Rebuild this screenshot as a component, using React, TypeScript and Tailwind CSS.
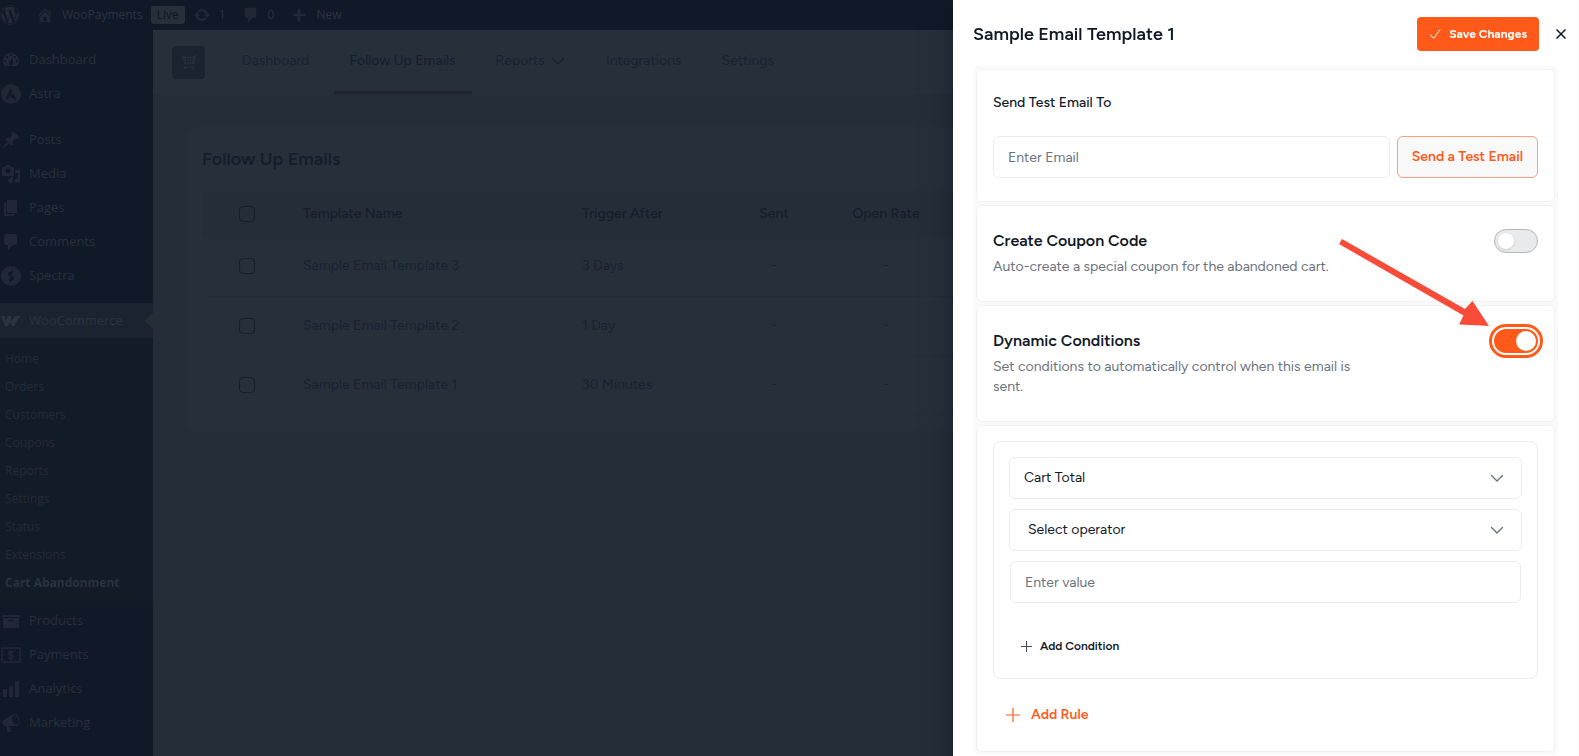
import { useState, type ReactNode } from "react";
import { FaWordpress } from "react-icons/fa";

interface MenuItem {
  label: string;
  icon: ReactNode;
}

interface Template {
  id: number;
  name: string;
  trigger: string;
}

// 20x20 admin glyphs
const glyphs = {
  dashboard:
    "M3.76 16h12.48A7.998 7.998 0 0 0 10 3a7.998 7.998 0 0 0-6.24 13zM10 4c.55 0 1 .45 1 1s-.45 1-1 1-1-.45-1-1 .45-1 1-1zM6 6c.55 0 1 .45 1 1s-.45 1-1 1-1-.45-1-1 .45-1 1-1zm8 0c.55 0 1 .45 1 1s-.45 1-1 1-1-.45-1-1 .45-1 1-1zm-5.37 5.55L12 7v6c0 1.1-.9 2-2 2s-2-.9-2-2c0-.57.24-1.08.63-1.45zM4 10c.55 0 1 .45 1 1s-.45 1-1 1-1-.45-1-1 .45-1 1-1zm12 0c.55 0 1 .45 1 1s-.45 1-1 1-1-.45-1-1 .45-1 1-1z",
  astra:
    "M10 0a10 10 0 1 0 0 20 10 10 0 0 0 0-20zM9.6 4.2l1.5 3-3.8 8.3H4.4zM11.8 8.6l3.7 6.9h-3l-.8-1.7H9.4z",
  posts:
    "M10.44 3.02l1.82-1.82 6.36 6.35-1.83 1.82c-1.05-.68-2.48-.57-3.41.36l-.75.75c-.92.93-1.04 2.35-.35 3.41l-1.83 1.82-2.41-2.41-2.8 2.79c-.42.42-3.38 2.71-3.8 2.29s1.86-3.39 2.28-3.81l2.79-2.79L4.1 9.36l1.83-1.82c1.05.69 2.48.57 3.4-.36l.75-.75c.93-.92 1.05-2.35.36-3.41z",
  media:
    "M13 11V4c0-.55-.45-1-1-1h-1.67L9 1H5L3.67 3H2c-.55 0-1 .45-1 1v7c0 .55.45 1 1 1h10c.55 0 1-.45 1-1zM7 4.5c1.38 0 2.5 1.12 2.5 2.5S8.38 9.5 7 9.5 4.5 8.38 4.5 7 5.62 4.5 7 4.5zM14 6h5v10.5c0 1.38-1.12 2.5-2.5 2.5S14 17.88 14 16.5s1.12-2.5 2.5-2.5c.17 0 .34.02.5.05V9h-3V6zm-4 8.05V13h2v3.5c0 1.38-1.12 2.5-2.5 2.5S7 17.88 7 16.5 8.12 14 9.5 14c.17 0 .34.02.5.05z",
  pages: "M6 15V2h10v13H6zm-1 1h8v2H3V5h2v11z",
  comments:
    "M5 2h9c1.1 0 2 .9 2 2v7c0 1.1-.9 2-2 2h-2l-5 5v-5H5c-1.1 0-2-.9-2-2V4c0-1.1.9-2 2-2z",
  spectra:
    "M10 0a10 10 0 1 0 0 20 10 10 0 0 0 0-20zM11.8 4v3.4L9.4 9l3.4 1.6v2.6L8.2 16v-3.4l2.4-1.6-3.4-1.6V6.8z",
  woo: "M0 5h3.6l.7 5.2L7.2 5h2.6l.8 5.2C12 7.6 13.2 6 14 5h6c-3 2.6-5 6.4-6.2 10h-3.2L9.4 11.2 7.2 15H4z",
  products: "M19 4v2H1V4h18zM2 7h16v10H2V7zm11 3V9H7v1h6z",
  analytics: "M18 18V2h-4v16h4zm-6 0V7H8v11h4zm-6 0v-8H2v8h4z",
  marketing:
    "M18.15 5.94c.46 1.62.38 3.22-.02 4.48-.42 1.28-1.26 2.18-2.3 2.48-.16.06-.26.06-.4.06-.06.02-.12.02-.18.02-.06.02-.14.02-.22.02h-6.8l2.22 5.5c.02.14-.06.26-.14.34-.08.1-.24.16-.34.16H6.95c-.1 0-.26-.06-.34-.16-.08-.08-.16-.2-.14-.34l-1-5.5H4.25l-.02-.02c-.5.06-1.08-.18-1.54-.62s-.88-1.08-1.06-1.88c-.24-.8-.2-1.56-.02-2.2.18-.62.58-1.08 1.06-1.3l.02-.02 9-5.4c.1-.06.18-.1.24-.16.06-.04.14-.08.24-.12.16-.08.28-.12.5-.18 1.04-.3 2.24.1 3.22.98s1.84 2.24 2.26 3.86zm-2.58 5.98h-.02c.4-.1.74-.34 1.04-.7.58-.7.86-1.76.86-3.04 0-.64-.1-1.3-.28-1.98-.34-1.36-1.02-2.5-1.78-3.24s-1.68-1.1-2.46-.88c-.82.22-1.4.96-1.7 2-.32 1.04-.28 2.36.06 3.72.38 1.36 1 2.5 1.8 3.24.78.74 1.62 1.1 2.48.88z",
  home: "M16 8.5l1.53 1.53-1.06 1.06L10 4.6l-6.47 6.49-1.06-1.06L10 2.5l4 4v-2h2v4zm-6-2.46l6 5.99V18H4v-5.97zM12 17v-5H8v5h4z",
  update:
    "M10.2 3.28c3.53 0 6.43 2.61 6.92 6h2.08l-3.5 4-3.5-4h2.32c-.45-1.97-2.21-3.45-4.32-3.45-1.45 0-2.73.71-3.54 1.78L4.95 5.66C6.23 4.2 8.11 3.28 10.2 3.28zm-.4 13.44c-3.52 0-6.43-2.61-6.92-6H.8l3.5-4c1.17 1.33 2.33 2.67 3.5 4H5.48c.45 1.97 2.21 3.45 4.32 3.45 1.45 0 2.73-.71 3.54-1.78l1.71 1.95c-1.28 1.46-3.15 2.38-5.25 2.38z",
  plus: "M17 8.5v3h-5.5V17h-3v-5.5H3v-3h5.5V3h3v5.5z",
};

function Glyph({ d, className = "size-5 text-[#1f2834]" }: { d: string; className?: string }) {
  return (
    <svg className={`${className} shrink-0`} viewBox="0 0 20 20" fill="currentColor" fillRule="evenodd">
      <path d={d} />
    </svg>
  );
}

function PaymentsIcon() {
  return (
    <svg className="size-5 shrink-0 text-[#1f2834]" viewBox="0 0 20 20" fill="none" stroke="currentColor">
      <rect x="1" y="3" width="18" height="14" strokeWidth="1.5" />
      <path
        d="M12.5 7.5C12 6.7 11 6.5 10 6.5c-1.4 0-2.5.6-2.5 1.7 0 2.3 5 1.3 5 3.6 0 1.1-1.1 1.7-2.5 1.7-1 0-2-.3-2.5-1M10 5v10"
        strokeWidth="1.3"
      />
    </svg>
  );
}

function Chevron({ className }: { className: string }) {
  return (
    <svg className={className} viewBox="0 0 16 16" fill="none" stroke="currentColor" strokeWidth={1.4}>
      <path d="M2.5 5.5L8 11l5.5-5.5" strokeLinecap="round" strokeLinejoin="round" />
    </svg>
  );
}

function Plus({ className }: { className: string }) {
  return (
    <svg className={className} viewBox="0 0 14 14" fill="none" stroke="currentColor" strokeWidth={1.2}>
      <path d="M7 0v14M0 7h14" />
    </svg>
  );
}

const coreMenu: MenuItem[] = [
  { label: "Dashboard", icon: <Glyph d={glyphs.dashboard} /> },
  { label: "Astra", icon: <Glyph d={glyphs.astra} /> },
];

const contentMenu: MenuItem[] = [
  { label: "Posts", icon: <Glyph d={glyphs.posts} /> },
  { label: "Media", icon: <Glyph d={glyphs.media} /> },
  { label: "Pages", icon: <Glyph d={glyphs.pages} /> },
  { label: "Comments", icon: <Glyph d={glyphs.comments} /> },
  { label: "Spectra", icon: <Glyph d={glyphs.spectra} /> },
];

const storeMenu: MenuItem[] = [
  { label: "Products", icon: <Glyph d={glyphs.products} /> },
  { label: "Payments", icon: <PaymentsIcon /> },
  { label: "Analytics", icon: <Glyph d={glyphs.analytics} /> },
  { label: "Marketing", icon: <Glyph d={glyphs.marketing} /> },
];

const wooSubmenu = [
  "Home",
  "Orders",
  "Customers",
  "Coupons",
  "Reports",
  "Settings",
  "Status",
  "Extensions",
  "Cart Abandonment",
];

const tabs = ["Dashboard", "Follow Up Emails", "Reports", "Integrations", "Settings"];

const templates: Template[] = [
  { id: 3, name: "Sample Email Template 3", trigger: "3 Days" },
  { id: 2, name: "Sample Email Template 2", trigger: "1 Day" },
  { id: 1, name: "Sample Email Template 1", trigger: "30 Minutes" },
];

function MenuGroup({ items }: { items: MenuItem[] }) {
  return (
    <ul>
      {items.map((item) => (
        <li key={item.label}>
          <a href="#" className="flex h-[34px] items-center gap-2 px-px">
            {item.icon}
            {item.label}
          </a>
        </li>
      ))}
    </ul>
  );
}

function AdminBar() {
  return (
    <div className="flex h-[30px] items-center bg-[#101927] text-xs text-[#2b343f]">
      <FaWordpress className="size-5 text-[#232c38]" />
      <a href="#" className="ml-4 flex items-center gap-2">
        <Glyph d={glyphs.home} className="size-[18px] text-[#1f2834]" />
        WooPayments
      </a>
      <span className="ml-2 rounded-xs bg-[#25303b] px-1.5 leading-[18px] text-[#101927]">Live</span>
      <a href="#" className="ml-2 flex items-center gap-2">
        <Glyph d={glyphs.update} className="size-[18px] text-[#1f2834]" />1
      </a>
      <a href="#" className="ml-4 flex items-center gap-2">
        <Glyph d={glyphs.comments} className="size-[18px] text-[#1f2834]" />0
      </a>
      <a href="#" className="ml-4 flex items-center gap-2">
        <Glyph d={glyphs.plus} className="size-[18px] text-[#1f2834]" />
        New
      </a>
    </div>
  );
}

function Sidebar() {
  return (
    <nav className="w-[153px] shrink-0 bg-[#101927] pt-[13px] text-[13px] text-[#27303b]">
      <MenuGroup items={coreMenu} />
      <div className="mt-3">
        <MenuGroup items={contentMenu} />
      </div>
      <a
        href="#"
        className="relative mt-2.5 flex h-[35px] items-center gap-2 bg-[#1a232f] px-px text-[#2a333e]"
      >
        <Glyph d={glyphs.woo} className="size-5 text-[#2a333e]" />
        WooCommerce
        <span className="absolute right-0 border-y-8 border-r-8 border-y-transparent border-r-[#242e39]" />
      </a>
      <ul className="bg-[#121b28] py-[7px] text-xs text-[#222b37]">
        {wooSubmenu.map((label) => (
          <li key={label}>
            <a
              href="#"
              className={`flex h-7 items-center px-[5px] ${label === "Cart Abandonment" ? "font-bold text-[#29323d]" : ""}`}
            >
              {label}
            </a>
          </li>
        ))}
      </ul>
      <MenuGroup items={storeMenu} />
    </nav>
  );
}

function RowCheckbox({ label }: { label: string }) {
  return (
    <input
      type="checkbox"
      aria-label={label}
      className="block size-4 appearance-none rounded-sm border border-[#151e2b]"
    />
  );
}

function EmailsPage() {
  return (
    <main className="min-w-0 flex-1 bg-[#242e39] font-[Figtree,Inter,sans-serif] text-sm text-[#182230]">
      <header className="flex h-16 items-center bg-[#26303b] pl-[19px]">
        <div className="flex size-[33px] items-center justify-center rounded-sm bg-[#1b2230] text-[#25303c]">
          <svg className="size-4" viewBox="0 0 16 16" fill="currentColor">
            <path d="M14.8.5H16v1h-.7L13.8 10H3.6L.5 2.5h12.8zM3 13.5a1 1 0 0 1 1-1h9v1H5.5a1.3 1.3 0 1 1-2.5 0zM11 14.5a1.3 1.3 0 1 0 2.6 0 1.3 1.3 0 0 0-2.6 0z" />
            <path
              d="M2 5h12M3 7.500h10.500M5 2.500l1 7.500M8 2.500V10M11 2.500L10.500 10"
              stroke="#1b2230"
              strokeWidth=".7"
            />
          </svg>
        </div>
        <nav className="ml-[21px] flex h-full gap-2">
          {tabs.map((tab) => (
            <a
              key={tab}
              href="#"
              className={`flex items-center gap-[5px] border-b-3 px-4 ${
                tab === "Follow Up Emails" ? "border-[#1d2431] text-[#141d2b]" : "border-transparent"
              }`}
            >
              {tab}
              {tab === "Reports" && <Chevron className="size-4" />}
            </a>
          ))}
        </nav>
      </header>

      <section className="m-[33px] rounded-xl bg-[#26303b] p-4">
        <h1 className="mb-[18px] pt-0.5 text-lg font-semibold text-[#141d2b]">Follow Up Emails</h1>
        <table className="w-full table-fixed text-left">
          <thead>
            <tr className="h-[46px] bg-[#242e39] text-[#141d2b]">
              <th className="w-[101px] pl-[37px]">
                <RowCheckbox label="Select all templates" />
              </th>
              <th className="w-[279px] font-medium">Template Name</th>
              <th className="w-[143px] font-medium">Trigger After</th>
              <th className="w-[98px] text-center font-medium">Sent</th>
              <th className="w-[126px] text-center font-medium">Open Rate</th>
              <th />
            </tr>
          </thead>
          <tbody>
            {templates.map((t) => (
              <tr key={t.id} className="h-[59px] border-b border-[#232d38]">
                <td className="pl-[37px]">
                  <RowCheckbox label={t.name} />
                </td>
                <td>{t.name}</td>
                <td>{t.trigger}</td>
                <td className="text-center">-</td>
                <td className="text-center">-</td>
                <td />
              </tr>
            ))}
          </tbody>
        </table>
      </section>
    </main>
  );
}

interface SettingProps {
  id: string;
  title: string;
  description: string;
  children: ReactNode;
}

function SettingCard({ id, title, description, children }: SettingProps) {
  return (
    <div className="flex justify-between rounded-md border border-[#f1f1f2] bg-white px-4 pt-[23px] pb-6">
      <div className="max-w-[380px]">
        <label htmlFor={id} className="block text-base font-semibold">
          {title}
        </label>
        <p className="mt-1 text-[#6b7280]">{description}</p>
      </div>
      {children}
    </div>
  );
}

function Drawer() {
  const [coupon, setCoupon] = useState(false);
  const [dynamic, setDynamic] = useState(true);

  return (
    <aside className="fixed inset-y-0 right-0 w-[626px] border-r border-[#f8f8f8] bg-white font-[Figtree,Inter,sans-serif] text-sm text-[#111827] shadow-[0_20px_24px_rgba(10,18,30,0.5)]">
      <header className="flex h-[66px] items-center pt-0.5 pr-[11px] pl-5">
        <h2 className="text-lg font-semibold">Sample Email Template 1</h2>
        <button className="ml-auto flex h-[34px] items-center gap-2 rounded-sm bg-[#ff5a1a] px-3 text-xs font-bold text-white">
          <svg className="size-3" viewBox="0 0 12 12" fill="none" stroke="currentColor">
            <path d="M1 6.5L4.5 10.5 11 1.5" />
          </svg>
          Save Changes
        </button>
        <button aria-label="Close" className="ml-4 flex size-3 items-center justify-center">
          <svg className="size-[10px]" viewBox="0 0 10 10" fill="none" stroke="currentColor" strokeWidth={1.5}>
            <path d="M.5.5l9 9M9.5.5l-9 9" />
          </svg>
        </button>
      </header>

      <div className="mx-5 flex flex-col gap-[3px] rounded-md bg-[#fafafa] p-[3px]">
        <div className="h-[133px] rounded-md border border-[#f1f1f2] bg-white px-4 pt-[23px]">
          <label htmlFor="test-email" className="block font-medium">
            Send Test Email To
          </label>
          <div className="mt-[23px] flex gap-[7px]">
            <input
              id="test-email"
              type="email"
              placeholder="Enter Email"
              className="h-[42px] min-w-0 flex-1 rounded-md border border-[#ebecee] px-3.5 placeholder:text-[#6b7280]"
            />
            <button className="h-[42px] rounded-md border border-[#ff9f80] bg-[#f9f9f9] px-3.5 font-semibold text-[#ff5a1a]">
              Send a Test Email
            </button>
          </div>
        </div>

        <SettingCard
          id="coupon"
          title="Create Coupon Code"
          description="Auto-create a special coupon for the abandoned cart."
        >
          <input
            id="coupon"
            type="checkbox"
            role="switch"
            checked={coupon}
            onChange={(e) => setCoupon(e.target.checked)}
            className="flex h-6 w-11 appearance-none items-center rounded-full border border-[#b4b6bb] bg-[#e9eaec] px-[3px] before:size-4 before:rounded-full before:bg-white before:shadow-sm checked:justify-end checked:bg-[#ff5a1a]"
          />
        </SettingCard>

        <SettingCard
          id="dynamic"
          title="Dynamic Conditions"
          description="Set conditions to automatically control when this email is sent."
        >
          <div className="relative h-6">
            <input
              id="dynamic"
              type="checkbox"
              role="switch"
              checked={dynamic}
              onChange={(e) => setDynamic(e.target.checked)}
              className="flex h-6 w-11 appearance-none items-center rounded-full bg-[#e9eaec] px-0.5 outline-3 outline-offset-2 outline-[#ff5a1a] before:size-5 before:rounded-full before:bg-white checked:justify-end checked:bg-[#ff5a1a]"
            />
            <svg
              className="pointer-events-none absolute right-full bottom-[26px] mr-[5px] h-[88px] w-[150px]"
              viewBox="0 0 150 88"
              fill="#f94b38"
            >
              <path d="M3 0L126 70 133.5 62 150 87 120 85.5 124.5 76.5 0 5z" />
            </svg>
          </div>
        </SettingCard>

        <div className="rounded-md border border-[#f1f1f2] bg-white px-4 pt-[15px] pb-[26px]">
          <div className="flex flex-col gap-2.5 rounded-lg border border-[#ebecee] p-[15px] pb-4">
            <div className="relative">
              <select
                aria-label="Condition"
                className="h-[42px] w-full appearance-none rounded-md border border-[#ebecee] bg-white px-3.5"
              >
                <option>Cart Total</option>
              </select>
              <Chevron className="pointer-events-none absolute top-[13px] right-[17px] size-4 text-[#6b7280]" />
            </div>
            <div className="relative">
              <select
                aria-label="Operator"
                className="h-[42px] w-full appearance-none rounded-md border border-[#ebecee] bg-white px-[18px]"
              >
                <option>Select operator</option>
              </select>
              <Chevron className="pointer-events-none absolute top-[13px] right-[17px] size-4 text-[#6b7280]" />
            </div>
            <input
              aria-label="Value"
              placeholder="Enter value"
              className="mx-px h-[42px] rounded-md border border-[#ebecee] px-3.5 placeholder:text-[#6b7280]"
            />
            <button className="mt-[17px] flex h-8 items-center gap-2 self-start px-3 text-xs font-semibold">
              <Plus className="size-[11px] text-[#374151]" />
              Add Condition
            </button>
          </div>
          <button className="mt-[26px] flex items-center gap-[11px] px-[13px] font-semibold text-[#ff5a1a]">
            <Plus className="size-3.5" />
            Add Rule
          </button>
        </div>
      </div>
    </aside>
  );
}

export default function App() {
  return (
    <div className="flex h-screen flex-col overflow-hidden font-['Open_Sans',sans-serif]">
      <AdminBar />
      <div className="flex flex-1">
        <Sidebar />
        <EmailsPage />
      </div>
      <Drawer />
    </div>
  );
}
